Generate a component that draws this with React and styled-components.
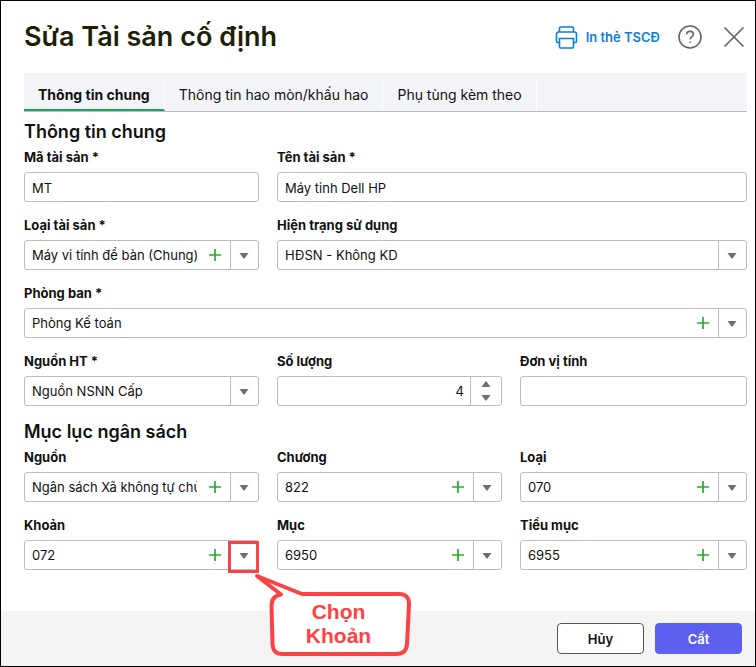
import React, { useId } from "react";
import styled, { createGlobalStyle, css } from "styled-components";

const GlobalStyle = createGlobalStyle`
  *, *::before, *::after { box-sizing: border-box; }
  body {
    margin: 0;
    background: #fff;
    color: #111;
    font-family: Inter, "Liberation Sans", sans-serif;
    font-size: 13px;
  }
  button, input, select { font: inherit; color: inherit; }
`;

const line = "#babcc8";

const Dialog = styled.form`
  display: flex;
  flex-direction: column;
  min-height: 100vh;
  border: 1px solid #000;
  background: #fff;
`;

const Header = styled.header`
  display: flex;
  align-items: center;
  justify-content: space-between;
  height: 72px;
  padding: 0 9px 0 23px;
`;

const Title = styled.h1`
  margin: 0;
  font-size: 27px;
  line-height: 34px;
  font-weight: 600;
  color: #1f1f06;
`;

const HeaderActions = styled.div`
  display: flex;
  align-items: center;
`;

const PrintLink = styled.a`
  display: flex;
  align-items: center;
  gap: 8px;
  margin-right: 18px;
  color: #0a80dd;
  font-weight: 600;
  text-decoration: none;
`;

const IconButton = styled.button`
  display: grid;
  place-items: center;
  width: 24px;
  height: 24px;
  padding: 0;
  border: 0;
  background: none;
  color: #666;
  cursor: pointer;
  & + & { margin-left: 20px; }
`;

const Main = styled.main`
  flex: 1;
  padding: 0 8px 40px 23px;
`;

const TabList = styled.div`
  display: flex;
  align-items: flex-end;
  height: 39px;
  background: #f3f4f8;
  border-bottom: 1px solid ${line};
`;

const Tab = styled.button`
  height: 32px;
  padding: 2px 14px 0;
  border: 0;
  border-right: 1px solid #fff;
  border-bottom: 2px solid ${(p) => (p.$active ? "#15ab58" : "transparent")};
  background: none;
  font-size: 14px;
  line-height: 20px;
  font-weight: ${(p) => (p.$active ? 700 : 400)};
  cursor: pointer;
`;

const Section = styled.section`
  margin-top: ${(p) => p.$gap}px;
`;

const SectionTitle = styled.h2`
  margin: 0 0 3px;
  font-size: 18px;
  line-height: 24px;
  font-weight: 600;
`;

const FieldGrid = styled.div`
  display: grid;
  grid-template-columns: minmax(0, 235fr) minmax(0, 225fr) minmax(0, 227fr);
  gap: 13px 18px;
`;

const Field = styled.div`
  display: flex;
  flex-direction: column;
  gap: 5px;
  grid-column: span ${(p) => p.$span || 1};
`;

const Label = styled.label`
  font-weight: 700;
  line-height: 20px;
`;

const boxed = css`
  height: 30px;
  border: 1px solid ${line};
  border-radius: 3px;
  background: #fff;
`;

const TextInput = styled.input`
  ${boxed}
  width: 100%;
  padding: 2px 7px 0;
  outline: none;
`;

const ComboBox = styled.div`
  ${boxed}
  position: relative;
  display: grid;
  grid-template-columns: minmax(0, 1fr) 30px 28px;
`;

const Select = styled.select`
  grid-area: 1 / 1 / 2 / 4;
  width: 100%;
  height: 28px;
  padding: 0 ${(p) => (p.$addable ? 61 : 31)}px 0 7px;
  border: 0;
  outline: none;
  background: none;
  appearance: none;
  overflow: hidden;
  text-overflow: clip;
`;

const AddButton = styled.button`
  grid-area: 1 / 2;
  display: grid;
  place-items: center;
  padding: 0;
  border: 0;
  background: none;
  color: #1fb12b;
  cursor: pointer;
`;

const Trigger = styled.span`
  grid-area: 1 / 3;
  display: grid;
  place-items: center;
  padding: 2px 2px 0 0;
  border-left: 1px solid ${line};
  color: #6e6e6e;
  pointer-events: none;
`;

const NumberBox = styled.div`
  ${boxed}
  display: grid;
  grid-template-columns: minmax(0, 1fr) 31px;
`;

const NumberInput = styled.input`
  width: 100%;
  padding: 0 6px;
  border: 0;
  outline: none;
  background: none;
  text-align: right;
  appearance: textfield;
  &::-webkit-inner-spin-button,
  &::-webkit-outer-spin-button { appearance: none; margin: 0; }
`;

const Stepper = styled.div`
  display: grid;
  grid-template-rows: 1fr 1fr;
  border-left: 1px solid ${line};
`;

const StepButton = styled.button`
  display: grid;
  place-items: center;
  padding: 0;
  border: 0;
  background: none;
  color: #6e6e6e;
`;

const Highlight = styled.span`
  position: absolute;
  top: 0;
  right: -1px;
  width: 31px;
  height: 32px;
  border: 3px solid #fb4346;
  pointer-events: none;
`;

const Callout = styled.div`
  position: absolute;
  z-index: 1;
  top: calc(100% + 4px);
  left: calc(100% - 4px);
  width: 160px;
  height: 84px;
  padding: 27px 0 0 9px;
  color: #fb4346;
  font-family: "Liberation Sans", sans-serif;
  font-size: 21px;
  line-height: 24px;
  font-weight: 700;
  text-align: center;
`;

const CalloutShape = styled.svg`
  position: absolute;
  inset: 0;
  z-index: -1;
`;

const CalloutLine = styled.span`
  display: block;
`;

const Footer = styled.footer`
  display: flex;
  justify-content: flex-end;
  gap: 11px;
  padding: 12px 13px;
  background: #f4f4f4;
`;

const Button = styled.button`
  width: 87px;
  height: 31px;
  padding: 0;
  border: 1px solid ${(p) => (p.$primary ? "#5d5fef" : "#55565c")};
  border-radius: 4px;
  background: ${(p) => (p.$primary ? "#5d5fef" : "#fff")};
  color: ${(p) => (p.$primary ? "#fff" : "#111")};
  font-weight: 600;
  cursor: pointer;
`;

const PrinterIcon = () => (
  <svg width="23" height="23" viewBox="0 0 23 23" fill="none" stroke="currentColor" strokeWidth="1.6" strokeLinejoin="round" aria-hidden="true">
    <path d="M4.500 6V2a1 1 0 0 1 1-1h12a1 1 0 0 1 1 1v4" />
    <path d="M4.500 16.500h-2a1 1 0 0 1-1-1V8a2 2 0 0 1 2-2h16a2 2 0 0 1 2 2v7.500a1 1 0 0 1-1 1h-2" />
    <path d="M3.500 12.500h16M4.500 12.500v8.500a1 1 0 0 0 1 1h12a1 1 0 0 0 1-1v-8.500" />
  </svg>
);

const HelpIcon = () => (
  <svg width="24" height="24" viewBox="0 0 24 24" fill="none" stroke="currentColor" strokeWidth="1.6" aria-hidden="true">
    <circle cx="12" cy="12" r="11" />
    <path d="M8.600 9.600c0-2 1.500-3.200 3.400-3.200s3.400 1.200 3.400 3c0 2.400-3.300 2.400-3.300 5" />
    <path d="M11.300 17.300h1.500" />
  </svg>
);

const CloseIcon = () => (
  <svg width="22" height="22" viewBox="0 0 22 22" fill="none" stroke="currentColor" strokeWidth="1.700" aria-hidden="true">
    <path d="M1.500 1.500l19 19M20.500 1.500l-19 19" />
  </svg>
);

const PlusIcon = () => (
  <svg width="14" height="14" viewBox="0 0 14 14" fill="none" stroke="currentColor" strokeWidth="1.700" aria-hidden="true">
    <path d="M7 1v12M1 7h12" />
  </svg>
);

const Caret = ({ up }) => (
  <svg width="10" height="6" viewBox="0 0 10 6" fill="currentColor" aria-hidden="true">
    <path d={up ? "M.5 6h9L5.500 .5h-1z" : "M.5 0h9L5.500 5.500h-1z"} />
  </svg>
);

function TextField({ label, value, span }) {
  const id = useId();
  return (
    <Field $span={span}>
      <Label htmlFor={id}>{label}</Label>
      <TextInput id={id} type="text" defaultValue={value} />
    </Field>
  );
}

function SelectField({ label, value, span, addable, children }) {
  const id = useId();
  return (
    <Field $span={span}>
      <Label htmlFor={id}>{label}</Label>
      <ComboBox>
        <Select id={id} $addable={addable}>
          <option>{value}</option>
        </Select>
        {addable && (
          <AddButton type="button" aria-label="Thêm">
            <PlusIcon />
          </AddButton>
        )}
        <Trigger>
          <Caret />
        </Trigger>
        {children}
      </ComboBox>
    </Field>
  );
}

function NumberField({ label, value }) {
  const id = useId();
  return (
    <Field>
      <Label htmlFor={id}>{label}</Label>
      <NumberBox>
        <NumberInput id={id} type="number" defaultValue={value} />
        <Stepper>
          <StepButton type="button" aria-label="Tăng">
            <Caret up />
          </StepButton>
          <StepButton type="button" aria-label="Giảm">
            <Caret />
          </StepButton>
        </Stepper>
      </NumberBox>
    </Field>
  );
}

const tabs = ["Thông tin chung", "Thông tin hao mòn/khấu hao", "Phụ tùng kèm theo"];

export default function App() {
  return (
    <>
      <GlobalStyle />
      <Dialog onSubmit={(e) => e.preventDefault()}>
        <Header>
          <Title>Sửa Tài sản cố định</Title>
          <HeaderActions>
            <PrintLink href="#print">
              <PrinterIcon />
              In thẻ TSCĐ
            </PrintLink>
            <IconButton type="button" aria-label="Trợ giúp">
              <HelpIcon />
            </IconButton>
            <IconButton type="button" aria-label="Đóng">
              <CloseIcon />
            </IconButton>
          </HeaderActions>
        </Header>
        <Main>
          <TabList role="tablist">
            {tabs.map((name, i) => (
              <Tab key={name} type="button" role="tab" aria-selected={i === 0} $active={i === 0}>
                {name}
              </Tab>
            ))}
          </TabList>
          <Section $gap={8}>
            <SectionTitle>Thông tin chung</SectionTitle>
            <FieldGrid>
              <TextField label="Mã tài sản *" value="MT" />
              <TextField label="Tên tài sản *" value="Máy tinh Dell HP" span={2} />
              <SelectField label="Loại tài sản *" value="Máy vi tính để bàn (Chung)" addable />
              <SelectField label="Hiện trạng sử dụng" value="HĐSN - Không KD" span={2} />
              <SelectField label="Phòng ban *" value="Phòng Kế toán" span={3} addable />
              <SelectField label="Nguồn HT *" value="Nguồn NSNN Cấp" />
              <NumberField label="Số lượng" value={4} />
              <TextField label="Đơn vị tính" value="" />
            </FieldGrid>
          </Section>
          <Section $gap={14}>
            <SectionTitle>Mục lục ngân sách</SectionTitle>
            <FieldGrid>
              <SelectField label="Nguồn" value="Ngân sách Xã không tự chủ" addable />
              <SelectField label="Chương" value="822" addable />
              <SelectField label="Loại" value="070" addable />
              <SelectField label="Khoản" value="072" addable>
                <Highlight />
                <Callout>
                  <CalloutShape width="160" height="84" viewBox="0 0 160 84" fill="#fff" stroke="#fb4346" strokeWidth="4" strokeLinejoin="round" aria-hidden="true">
                    <path d="M3 3L48 21H145Q155.500 21 155 32L153 71Q152.500 81 142 81H28Q19 81 18.500 71L17.500 33Q17.500 23 27 21.500Z" />
                  </CalloutShape>
                  <CalloutLine>Chọn</CalloutLine>
                  <CalloutLine>Khoản</CalloutLine>
                </Callout>
              </SelectField>
              <SelectField label="Mục" value="6950" addable />
              <SelectField label="Tiểu mục" value="6955" addable />
            </FieldGrid>
          </Section>
        </Main>
        <Footer>
          <Button type="button">Hủy</Button>
          <Button type="submit" $primary>
            Cất
          </Button>
        </Footer>
      </Dialog>
    </>
  );
}
